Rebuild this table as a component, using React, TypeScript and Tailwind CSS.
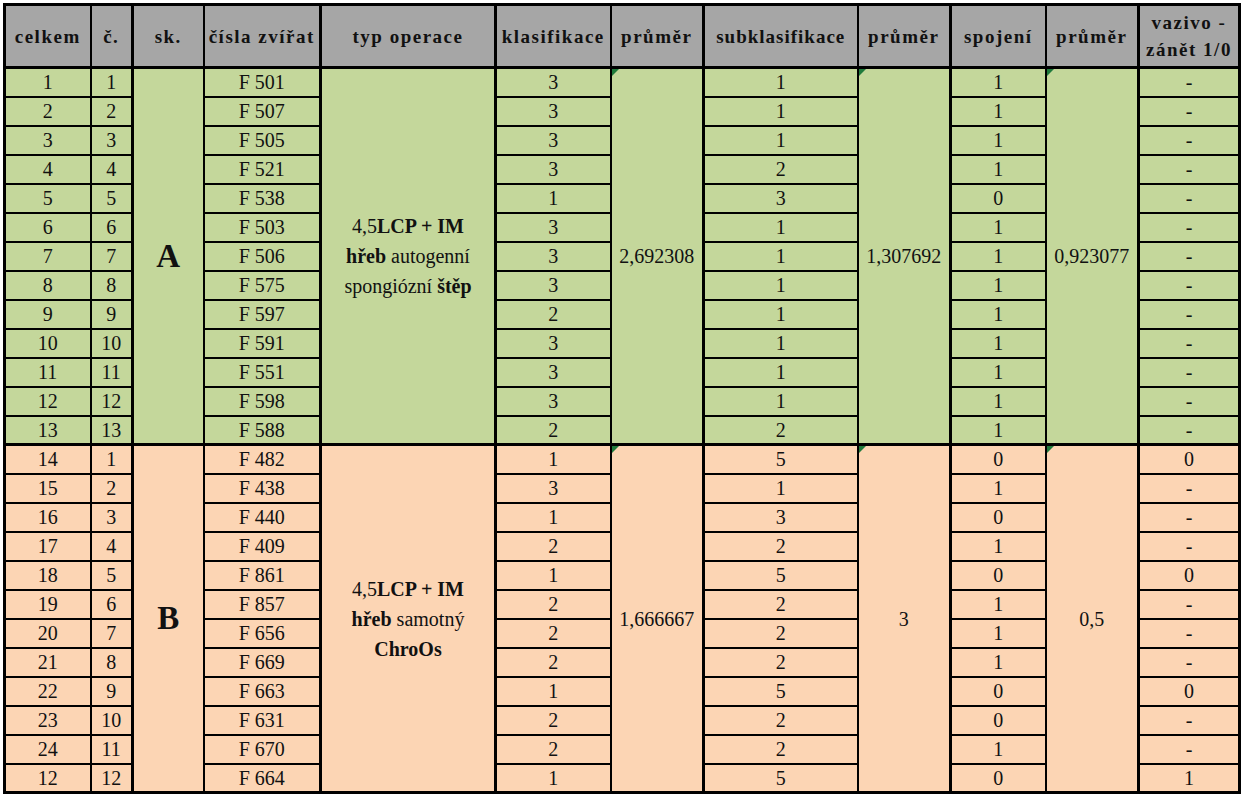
import React from 'react';

type Row = [string, string, string, string, string, string, string];

const groupA: Row[] = [
  ['1', '1', 'F 501', '3', '1', '1', '-'],
  ['2', '2', 'F 507', '3', '1', '1', '-'],
  ['3', '3', 'F 505', '3', '1', '1', '-'],
  ['4', '4', 'F 521', '3', '2', '1', '-'],
  ['5', '5', 'F 538', '1', '3', '0', '-'],
  ['6', '6', 'F 503', '3', '1', '1', '-'],
  ['7', '7', 'F 506', '3', '1', '1', '-'],
  ['8', '8', 'F 575', '3', '1', '1', '-'],
  ['9', '9', 'F 597', '2', '1', '1', '-'],
  ['10', '10', 'F 591', '3', '1', '1', '-'],
  ['11', '11', 'F 551', '3', '1', '1', '-'],
  ['12', '12', 'F 598', '3', '1', '1', '-'],
  ['13', '13', 'F 588', '2', '2', '1', '-'],
];

const groupB: Row[] = [
  ['14', '1', 'F 482', '1', '5', '0', '0'],
  ['15', '2', 'F 438', '3', '1', '1', '-'],
  ['16', '3', 'F 440', '1', '3', '0', '-'],
  ['17', '4', 'F 409', '2', '2', '1', '-'],
  ['18', '5', 'F 861', '1', '5', '0', '0'],
  ['19', '6', 'F 857', '2', '2', '1', '-'],
  ['20', '7', 'F 656', '2', '2', '1', '-'],
  ['21', '8', 'F 669', '2', '2', '1', '-'],
  ['22', '9', 'F 663', '1', '5', '0', '0'],
  ['23', '10', 'F 631', '2', '2', '0', '-'],
  ['24', '11', 'F 670', '2', '2', '1', '-'],
  ['12', '12', 'F 664', '1', '5', '0', '1'],
];

// little green "error" flag excel puts in the corner
function Flag() {
  return (
    <svg className="absolute left-0 top-0" width="7" height="7" viewBox="0 0 7 7">
      <polygon points="0,0 7,0 0,7" fill="#1f7a3c" />
    </svg>
  );
}

const thin = 'border-t-2 border-b-2 border-l-2 border-r-2 border-black';

interface GroupProps {
  rows: Row[];
  bg: string;
  label: string;
  op: React.ReactNode;
  avgs: [string, string, string];
}

function Group({ rows, bg, label, op, avgs }: GroupProps) {
  const n = rows.length;
  return (
    <>
      {rows.map((r, i) => {
        const last = i === n - 1;
        const bottom = last ? 'border-b-[3px]' : 'border-b-2';
        return (
          <tr key={r[0] + r[2]} className={`h-[29px] ${bg}`}>
            <td className={`border-t-2 ${bottom} border-l-[3px] border-r-2 border-black`}>{r[0]}</td>
            <td className={`border-t-2 ${bottom} border-l-2 border-r-[3px] border-black`}>{r[1]}</td>
            {i === 0 && (
              <td rowSpan={n} className="border-t-[3px] border-b-[3px] border-l-[3px] border-r-2 border-black align-middle">
                <span className="text-[33px] font-bold">{label}</span>
              </td>
            )}
            <td className={`border-t-2 ${bottom} border-l-2 border-r-[3px] border-black`}>{r[2]}</td>
            {i === 0 && (
              <td rowSpan={n} className="border-t-[3px] border-b-[3px] border-l-[3px] border-r-[3px] border-black leading-[30px]">
                {op}
              </td>
            )}
            <td className={`border-t-2 ${bottom} border-l-[3px] border-r-2 border-black`}>{r[3]}</td>
            {i === 0 && (
              <td rowSpan={n} className="relative border-t-[3px] border-b-[3px] border-l-2 border-r-[3px] border-black">
                <Flag />
                {avgs[0]}
              </td>
            )}
            <td className={`border-t-2 ${bottom} border-l-[3px] border-r-2 border-black`}>{r[4]}</td>
            {i === 0 && (
              <td rowSpan={n} className="relative border-t-[3px] border-b-[3px] border-l-2 border-r-[3px] border-black">
                <Flag />
                {avgs[1]}
              </td>
            )}
            <td className={`border-t-2 ${bottom} border-l-[3px] border-r-2 border-black`}>{r[5]}</td>
            {i === 0 && (
              <td rowSpan={n} className="relative border-t-[3px] border-b-[3px] border-l-2 border-r-[3px] border-black">
                <Flag />
                {avgs[2]}
              </td>
            )}
            <td className={`border-t-2 ${bottom} border-l-[3px] border-r-[3px] border-black`}>{r[6]}</td>
          </tr>
        );
      })}
    </>
  );
}

export default function App() {
  const head = 'border-t-[3px] border-b-[3px] border-black font-bold tracking-[1.5px] text-[19px] leading-[27px] bg-[#a6a6a6]';
  return (
    <div className="min-h-[800px] w-[1244px] bg-white pt-[3px] pl-[3px] font-['Liberation_Serif',serif] text-[#111]">
      <table className="w-[1235px] table-fixed border-collapse text-center text-[20px] leading-none">
        <colgroup>
          <col className="w-[86px]" />
          <col className="w-[42px]" />
          <col className="w-[71px]" />
          <col className="w-[117px]" />
          <col className="w-[175px]" />
          <col className="w-[115px]" />
          <col className="w-[93px]" />
          <col className="w-[154px]" />
          <col className="w-[93px]" />
          <col className="w-[95px]" />
          <col className="w-[93px]" />
          <col className="w-[101px]" />
        </colgroup>
        <thead>
          <tr className="h-[63px]">
            <th className={`${head} border-l-[3px] border-r-2`}>celkem</th>
            <th className={`${head} border-l-2 border-r-[3px]`}>č.</th>
            <th className={`${head} border-l-[3px] border-r-2`}>sk.</th>
            <th className={`${head} border-l-2 border-r-[3px] tracking-[0.5px]`}>čísla zvířat</th>
            <th className={`${head} border-l-[3px] border-r-[3px]`}>typ operace</th>
            <th className={`${head} border-l-[3px] border-r-2 tracking-[0.5px]`}>klasifikace</th>
            <th className={`${head} border-l-2 border-r-[3px]`}>průměr</th>
            <th className={`${head} border-l-[3px] border-r-2 tracking-[1px]`}>subklasifikace</th>
            <th className={`${head} border-l-2 border-r-[3px]`}>průměr</th>
            <th className={`${head} border-l-[3px] border-r-2`}>spojení</th>
            <th className={`${head} border-l-2 border-r-[3px]`}>průměr</th>
            <th className={`${head} border-l-[3px] border-r-[3px]`}>
              vazivo -<br />zánět 1/0
            </th>
          </tr>
        </thead>
        <tbody>
          <Group
            rows={groupA}
            bg="bg-[#c4d79b]"
            label="A"
            avgs={['2,692308', '1,307692', '0,923077']}
            op={
              <>
                4,5<b>LCP + IM</b>
                <br />
                <b>hřeb</b> autogenní
                <br />
                spongiózní <b>štěp</b>
              </>
            }
          />
          <Group
            rows={groupB}
            bg="bg-[#fcd5b4]"
            label="B"
            avgs={['1,666667', '3', '0,5']}
            op={
              <>
                4,5<b>LCP + IM</b>
                <br />
                <b>hřeb</b> samotný
                <br />
                <b>ChroOs</b>
              </>
            }
          />
        </tbody>
      </table>
      {/* unused classes guard */}
      <span className={`hidden ${thin}`} />
    </div>
  );
}
